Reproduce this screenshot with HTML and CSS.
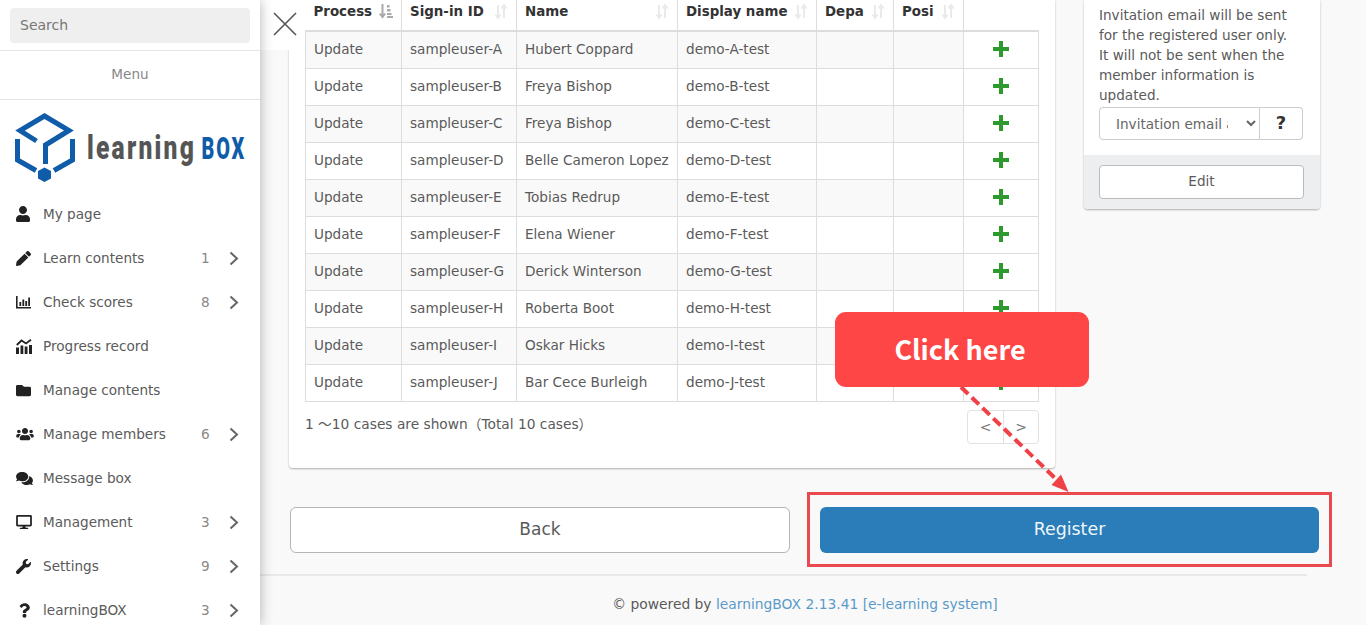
FILE: index.html
```html
<!DOCTYPE html>
<html lang="en">
<head>
<meta charset="utf-8">
<title>learningBOX</title>
<link rel="stylesheet" href="styles.css">
</head>
<body>
<aside class="sidebar">
  <div class="search-box"><input class="search-input" type="text" placeholder="Search"></div>
  <div class="menu-title">Menu</div>
  <div class="logo">
    <svg class="logo-svg" width="260" height="76" viewBox="0 108 260 76">
      <g fill="none" stroke="#0f5ca8" stroke-width="5" stroke-linejoin="miter">
        <path d="M36.500 141 20 130.500 44.500 116 69 130.500 45.500 145V164"/>
        <path d="M17.500 139V160L36 170.500"/>
        <path d="M72.500 139V160L54 170.500"/>
      </g>
      <path class="logo-dot" d="M44.500 167.500 51 171V178.500L44.500 182 38 178.500V171Z"/>
      <text class="logo-word" transform="translate(87 159) scale(.745 1)">learning</text>
      <text class="logo-box" transform="translate(201.500 159) scale(.62 1)">BOX</text>
    </svg>
  </div>
  <nav class="nav">
    <a class="nav-item"><span class="nav-icon"><svg width="14" height="16" viewBox="0 0 448 512"><path d="M224 256c70.700 0 128-57.300 128-128S294.700 0 224 0 96 57.300 96 128s57.300 128 128 128zm89.600 32h-16.700c-22.200 10.200-46.900 16-72.900 16s-50.600-5.800-72.900-16h-16.700C60.200 288 0 348.200 0 422.400V464c0 26.500 21.500 48 48 48h352c26.500 0 48-21.500 48-48v-41.600c0-74.200-60.200-134.400-134.400-134.400z"/></svg></span><span class="nav-label">My page</span></a>
    <a class="nav-item"><span class="nav-icon"><svg width="15" height="15" viewBox="0 0 512 512"><path d="M497.900 142.100l-46.100 46.100c-4.700 4.700-12.300 4.700-17 0l-111-111c-4.700-4.700-4.700-12.300 0-17l46.100-46.100c18.700-18.700 49.100-18.700 67.900 0l60.100 60.100c18.800 18.700 18.800 49.100 0 67.900zM284.200 99.800L21.600 362.400.4 483.900c-2.900 16.400 11.400 30.600 27.800 27.800l121.500-21.300 262.600-262.600c4.700-4.700 4.700-12.300 0-17l-111-111c-4.800-4.700-12.400-4.700-17.100 0z"/></svg></span><span class="nav-label">Learn contents</span><span class="nav-count">1</span><svg class="chev" width="10" height="15" viewBox="0 0 10 15"><path d="M1.500 1.500 8 7.500 1.500 13.500"/></svg></a>
    <a class="nav-item"><span class="nav-icon"><svg width="15" height="13" viewBox="0 0 15 13"><path d="M0 0h1.600v11H15v1.600H0z"/><path d="M3.400 6h1.800v4H3.400zM6.400 3.500h1.800V10H6.400zM9.300 5h1.800v5H9.300zM12.200 1.500H14V10h-1.800z"/></svg></span><span class="nav-label">Check scores</span><span class="nav-count">8</span><svg class="chev" width="10" height="15" viewBox="0 0 10 15"><path d="M1.500 1.500 8 7.500 1.500 13.500"/></svg></a>
    <a class="nav-item"><span class="nav-icon"><svg width="16" height="15" viewBox="0 0 16 15"><path d="M0 8.500h3V15H0zM4.500 6.500h2.800V15H4.500zM8.700 7.500h2.800V15H8.700zM13 6h3v9h-3z"/><path d="M.8 6 5.500 1.500 10 4.500 15 .8" fill="none" stroke="#222" stroke-width="1.800"/></svg></span><span class="nav-label">Progress record</span></a>
    <a class="nav-item"><span class="nav-icon"><svg width="15" height="15" viewBox="0 0 512 512"><path d="M464 128H272l-64-64H48C21.490 64 0 85.490 0 112v288c0 26.510 21.490 48 48 48h416c26.510 0 48-21.490 48-48V176c0-26.510-21.490-48-48-48z"/></svg></span><span class="nav-label">Manage contents</span></a>
    <a class="nav-item"><span class="nav-icon"><svg width="18" height="14" viewBox="0 0 640 512"><path d="M96 224c35.300 0 64-28.700 64-64s-28.700-64-64-64-64 28.700-64 64 28.700 64 64 64zm448 0c35.300 0 64-28.700 64-64s-28.700-64-64-64-64 28.700-64 64 28.700 64 64 64zm32 32h-64c-17.600 0-33.500 7.100-45.100 18.600 40.300 22.100 68.900 62 75.100 109.400h66c17.700 0 32-14.300 32-32v-32c0-35.300-28.700-64-64-64zm-256 0c61.900 0 112-50.100 112-112S381.900 32 320 32 208 82.100 208 144s50.100 112 112 112zm76.800 32h-8.300c-20.800 10-43.900 16-68.500 16s-47.600-6-68.500-16h-8.300C179.600 288 128 339.600 128 403.200V432c0 26.500 21.500 48 48 48h288c26.500 0 48-21.500 48-48v-28.800c0-63.600-51.600-115.200-115.200-115.200zm-223.700-13.400C161.500 263.100 145.600 256 128 256H64c-35.300 0-64 28.700-64 64v32c0 17.700 14.300 32 32 32h65.900c6.300-47.400 34.900-87.300 75.200-109.400z"/></svg></span><span class="nav-label">Manage members</span><span class="nav-count">6</span><svg class="chev" width="10" height="15" viewBox="0 0 10 15"><path d="M1.500 1.500 8 7.500 1.500 13.500"/></svg></a>
    <a class="nav-item"><span class="nav-icon"><svg width="17" height="15" viewBox="0 0 576 512"><path d="M416 192c0-88.400-93.100-160-208-160S0 103.600 0 192c0 34.300 14.100 65.900 38 92-13.400 30.200-35.500 54.200-35.800 54.500-2.200 2.300-2.800 5.700-1.500 8.700S4.800 352 8 352c36.600 0 66.900-12.300 88.700-25 32.200 15.700 70.300 25 111.300 25 114.900 0 208-71.600 208-160zm122 220c23.900-26 38-57.700 38-92 0-66.900-53.500-124.200-129.300-148.100.9 6.600 1.300 13.300 1.300 20.100 0 105.900-107.700 192-240 192-10.800 0-21.300-.8-31.700-1.900C207.800 439.600 281.800 480 368 480c41 0 79.100-9.200 111.300-25 21.800 12.700 52.100 25 88.700 25 3.200 0 6.100-1.900 7.300-4.800 1.300-2.900.7-6.300-1.500-8.700-.3-.3-22.400-24.200-35.800-54.500z"/></svg></span><span class="nav-label">Message box</span></a>
    <a class="nav-item"><span class="nav-icon"><svg width="16" height="14" viewBox="0 0 576 512"><path d="M528 0H48C21.500 0 0 21.500 0 48v320c0 26.500 21.500 48 48 48h192l-16 48h-72c-13.300 0-24 10.700-24 24s10.700 24 24 24h272c13.300 0 24-10.700 24-24s-10.700-24-24-24h-72l-16-48h192c26.500 0 48-21.500 48-48V48c0-26.500-21.500-48-48-48zm-16 352H64V64h448v288z"/></svg></span><span class="nav-label">Management</span><span class="nav-count">3</span><svg class="chev" width="10" height="15" viewBox="0 0 10 15"><path d="M1.500 1.500 8 7.500 1.500 13.500"/></svg></a>
    <a class="nav-item"><span class="nav-icon"><svg width="15" height="15" viewBox="0 0 512 512"><path d="M507.730 109.100c-2.240-9.030-13.540-12.090-20.120-5.510l-74.360 74.360-67.880-11.310-11.310-67.880 74.360-74.360c6.620-6.620 3.430-17.900-5.660-20.160-47.380-11.740-99.550.91-136.580 37.930-39.640 39.640-50.550 97.100-34.050 147.200L18.740 402.760c-24.990 24.990-24.990 65.510 0 90.500 24.990 24.990 65.510 24.990 90.500 0l213.210-213.210c50.120 16.710 107.470 5.680 147.370-34.220 37.070-37.070 49.700-89.320 37.910-136.730z"/></svg></span><span class="nav-label">Settings</span><span class="nav-count">9</span><svg class="chev" width="10" height="15" viewBox="0 0 10 15"><path d="M1.500 1.500 8 7.500 1.500 13.500"/></svg></a>
    <a class="nav-item"><span class="nav-icon icon-q"><svg width="11" height="15" viewBox="0 0 384 512"><path d="M202.021 0C122.202 0 70.503 32.703 29.914 91.026c-7.363 10.580-5.093 25.086 5.178 32.874l43.138 32.709c10.373 7.865 25.132 6.026 33.253-4.148 25.049-31.381 43.630-49.449 82.757-49.449 30.764 0 68.816 19.799 68.816 49.631 0 22.552-18.617 34.134-48.993 51.164-35.423 19.860-82.299 44.576-82.299 106.405V320c0 13.255 10.745 24 24 24h72.471c13.255 0 24-10.745 24-24v-5.773c0-42.860 125.268-44.644 125.268-160.627C377.504 66.256 286.902 0 202.021 0zM192 373.459c-38.196 0-69.271 31.075-69.271 69.271 0 38.195 31.075 69.270 69.271 69.270s69.271-31.075 69.271-69.271-31.075-69.270-69.271-69.270z"/></svg></span><span class="nav-label">learningBOX</span><span class="nav-count">3</span><svg class="chev" width="10" height="15" viewBox="0 0 10 15"><path d="M1.500 1.500 8 7.500 1.500 13.500"/></svg></a>
  </nav>
</aside>

<main class="main">
  <button class="close-btn" type="button" aria-label="Close"><svg width="24" height="24" viewBox="0 0 24 24"><path d="M1 1 23 23M23 1 1 23"/></svg></button>

  <div class="top-row">
    <section class="card table-card">
      <table class="data-table">
        <colgroup><col class="c-process"><col class="c-id"><col class="c-name"><col class="c-display"><col class="c-dept"><col class="c-pos"><col class="c-action"></colgroup>
        <thead>
          <tr>
            <th><div class="th-inner"><span>Process</span><svg class="sort active" width="14" height="15" viewBox="0 0 14 15"><path d="M3.500 0v12M.8 9.500l2.700 3.500 2.700-3.500" fill="none" stroke-width="2"/><path class="fill" d="M8 1h2.500v2.500H8zM8 5h3.500v2.500H8zM8 9h4.500v2H8zM8 12h6v2H8z"/></svg></div></th>
            <th><div class="th-inner"><span>Sign-in ID</span><svg class="sort" width="14" height="15" viewBox="0 0 14 15"><path d="M4 1v12M1.500 10.500 4 14l2.500-3.500M10 14V2M7.500 4.500 10 1l2.500 3.500" fill="none" stroke-width="2"/></svg></div></th>
            <th><div class="th-inner"><span>Name</span><svg class="sort" width="14" height="15" viewBox="0 0 14 15"><path d="M4 1v12M1.500 10.500 4 14l2.500-3.500M10 14V2M7.500 4.500 10 1l2.500 3.500" fill="none" stroke-width="2"/></svg></div></th>
            <th><div class="th-inner"><span>Display name</span><svg class="sort" width="14" height="15" viewBox="0 0 14 15"><path d="M4 1v12M1.500 10.500 4 14l2.500-3.500M10 14V2M7.500 4.500 10 1l2.500 3.500" fill="none" stroke-width="2"/></svg></div></th>
            <th><div class="th-inner"><span>Depa</span><svg class="sort" width="14" height="15" viewBox="0 0 14 15"><path d="M4 1v12M1.500 10.500 4 14l2.500-3.500M10 14V2M7.500 4.500 10 1l2.500 3.500" fill="none" stroke-width="2"/></svg></div></th>
            <th><div class="th-inner"><span>Posi</span><svg class="sort" width="14" height="15" viewBox="0 0 14 15"><path d="M4 1v12M1.500 10.500 4 14l2.500-3.500M10 14V2M7.500 4.500 10 1l2.500 3.500" fill="none" stroke-width="2"/></svg></div></th>
            <th></th>
          </tr>
        </thead>
        <tbody>
          <tr><td>Update</td><td>sampleuser-A</td><td>Hubert Coppard</td><td>demo-A-test</td><td></td><td></td><td class="action"><svg class="plus" width="16" height="16" viewBox="0 0 16 16"><path d="M6 0h4v6h6v4h-6v6H6v-6H0V6h6z"/></svg></td></tr>
          <tr><td>Update</td><td>sampleuser-B</td><td>Freya Bishop</td><td>demo-B-test</td><td></td><td></td><td class="action"><svg class="plus" width="16" height="16" viewBox="0 0 16 16"><path d="M6 0h4v6h6v4h-6v6H6v-6H0V6h6z"/></svg></td></tr>
          <tr><td>Update</td><td>sampleuser-C</td><td>Freya Bishop</td><td>demo-C-test</td><td></td><td></td><td class="action"><svg class="plus" width="16" height="16" viewBox="0 0 16 16"><path d="M6 0h4v6h6v4h-6v6H6v-6H0V6h6z"/></svg></td></tr>
          <tr><td>Update</td><td>sampleuser-D</td><td>Belle Cameron Lopez</td><td>demo-D-test</td><td></td><td></td><td class="action"><svg class="plus" width="16" height="16" viewBox="0 0 16 16"><path d="M6 0h4v6h6v4h-6v6H6v-6H0V6h6z"/></svg></td></tr>
          <tr><td>Update</td><td>sampleuser-E</td><td>Tobias Redrup</td><td>demo-E-test</td><td></td><td></td><td class="action"><svg class="plus" width="16" height="16" viewBox="0 0 16 16"><path d="M6 0h4v6h6v4h-6v6H6v-6H0V6h6z"/></svg></td></tr>
          <tr><td>Update</td><td>sampleuser-F</td><td>Elena Wiener</td><td>demo-F-test</td><td></td><td></td><td class="action"><svg class="plus" width="16" height="16" viewBox="0 0 16 16"><path d="M6 0h4v6h6v4h-6v6H6v-6H0V6h6z"/></svg></td></tr>
          <tr><td>Update</td><td>sampleuser-G</td><td>Derick Winterson</td><td>demo-G-test</td><td></td><td></td><td class="action"><svg class="plus" width="16" height="16" viewBox="0 0 16 16"><path d="M6 0h4v6h6v4h-6v6H6v-6H0V6h6z"/></svg></td></tr>
          <tr><td>Update</td><td>sampleuser-H</td><td>Roberta Boot</td><td>demo-H-test</td><td></td><td></td><td class="action"><svg class="plus" width="16" height="16" viewBox="0 0 16 16"><path d="M6 0h4v6h6v4h-6v6H6v-6H0V6h6z"/></svg></td></tr>
          <tr><td>Update</td><td>sampleuser-I</td><td>Oskar Hicks</td><td>demo-I-test</td><td></td><td></td><td class="action"><svg class="plus" width="16" height="16" viewBox="0 0 16 16"><path d="M6 0h4v6h6v4h-6v6H6v-6H0V6h6z"/></svg></td></tr>
          <tr><td>Update</td><td>sampleuser-J</td><td>Bar Cece Burleigh</td><td>demo-J-test</td><td></td><td></td><td class="action"><svg class="plus" width="16" height="16" viewBox="0 0 16 16"><path d="M6 0h4v6h6v4h-6v6H6v-6H0V6h6z"/></svg></td></tr>
        </tbody>
      </table>
      <div class="table-foot">
        <span class="case-count">1 ～10 cases are shown（Total 10 cases）</span>
        <div class="pager"><span class="pager-btn">&lt;</span><span class="pager-btn">&gt;</span></div>
      </div>
    </section>

    <section class="card side-card">
      <div class="side-body">
        <p class="side-text">Invitation email will be sent for the registered user only.<br>It will not be sent when the member information is updated.</p>
        <div class="select-group">
          <select class="invite-select"><option>Invitation email after registration</option></select>
          <button class="help-btn" type="button">?</button>
        </div>
      </div>
      <div class="side-foot"><button class="edit-btn" type="button">Edit</button></div>
    </section>
  </div>

  <div class="action-row">
    <button class="btn btn-back" type="button">Back</button>
    <button class="btn btn-register" type="button">Register</button>
  </div>

  <footer class="footer">© powered by <a class="footer-link">learningBOX 2.13.41 [e-learning system]</a></footer>

  <svg class="arrow" width="1366" height="625" viewBox="0 0 1366 625">
    <path class="arrow-line" d="M961 387 1060 483"/>
    <path class="arrow-head" d="M1068.500 492 1051.500 485 1061 474.500z"/>
  </svg>
  <div class="highlight"></div>
  <div class="callout">Click here</div>
</main>
</body>
</html>
```

FILE: styles.css
```css
* { box-sizing: border-box; }
html, body { margin: 0; height: 625px; overflow: hidden; }
body {
  display: flex;
  background: #f9f9f9;
  color: #5a5a5a;
  font-family: "DejaVu Sans", "Noto Sans CJK JP", sans-serif;
  font-size: 13.6px;
}

/* Sidebar */
.sidebar {
  position: relative;
  z-index: 5;
  flex: 0 0 260px;
  height: 625px;
  background: #fff;
  box-shadow: 0 0 12px rgba(0, 0, 0, .3);
}
.search-box { height: 51px; padding: 8px 10px 0; border-bottom: 1px solid #e4e4e4; }
.search-input {
  display: block;
  width: 240px;
  height: 35px;
  padding: 0 10px 2px;
  border: 0;
  border-radius: 4px;
  background: #efefef;
  font: inherit;
  font-size: 14px;
}
.search-input::placeholder { color: #777; opacity: 1; }
.menu-title {
  height: 49px;
  line-height: 46px;
  text-align: center;
  color: #888;
  border-bottom: 1px solid #e4e4e4;
}
.logo { height: 92px; padding-top: 8px; }
.logo-svg { display: block; }
.logo-dot { fill: #0f5ca8; }
.logo-word { font-family: "Roboto", sans-serif; font-weight: 900; font-size: 33px; letter-spacing: 3px; fill: #555; }
.logo-box { font-family: "Roboto", sans-serif; font-weight: 900; font-size: 32px; letter-spacing: 3px; fill: #0f5ca8; }
.nav { display: flex; flex-direction: column; }
.nav-item { display: flex; align-items: center; height: 44px; padding-left: 16px; color: #5a5a5a; }
.nav-icon { flex: 0 0 27px; display: flex; align-items: center; justify-content: flex-start; }
.nav-icon svg { display: block; fill: #222; }
.icon-q { padding-left: 3px; }
.nav-label { flex: 1; }
.nav-count { width: 28px; color: #888; }
.chev { margin-right: 21px; fill: none; stroke: #666; stroke-width: 2; }

/* Main */
.main { position: relative; flex: 1; min-width: 0; padding: 0 46px 0 29px; }
.close-btn {
  position: absolute;
  left: 0;
  top: 0;
  display: flex;
  align-items: flex-start;
  width: 29px;
  height: 50px;
  padding: 12px 0 0 13px;
  border: 0;
  background: #fff;
  overflow: visible;
  z-index: 2;
}
.close-btn svg { display: block; flex: none; overflow: visible; fill: none; stroke: #555; stroke-width: 1.6; }

.top-row { display: flex; align-items: flex-start; gap: 29px; }
.card { background: #fff; border-radius: 0 0 4px 4px; box-shadow: 0 1px 2px rgba(0, 0, 0, .3); }
.table-card { flex: 0 0 765px; height: 468px; padding: 0 16px; }

.data-table { width: 733px; border-collapse: collapse; table-layout: fixed; }
.c-process { width: 96px; }
.c-id { width: 115px; }
.c-name { width: 161px; }
.c-display { width: 139px; }
.c-dept { width: 77px; }
.c-pos { width: 70px; }
.c-action { width: 75px; }
.data-table th {
  height: 31px;
  padding: 0 8px;
  border-left: 1px solid #ddd;
  border-right: 1px solid #ddd;
  border-bottom: 2px solid #ddd;
  color: #333;
  font-weight: 700;
  font-size: 13.4px;
  text-align: left;
  vertical-align: top;
}
.data-table th:first-child, .data-table th:last-child { border-left: 0; }
.data-table th:last-child { border-right: 0; }
.th-inner { display: flex; justify-content: space-between; align-items: center; height: 22px; }
.sort { flex: none; stroke: #eaeaea; }
.sort.active { stroke: #aaa; }
.sort .fill { fill: #aaa; stroke: none; }
.data-table td {
  height: 37px;
  padding: 0 8px 2px;
  border: 1px solid #ddd;
  white-space: nowrap;
}
.data-table tbody tr:nth-child(odd) td { background: #f9f9f9; }
.data-table tbody tr td.action { background: #fff; text-align: center; padding: 0 0 2px; }
.plus { display: block; margin: 0 auto; fill: #2e9a2e; }

.table-foot { display: flex; justify-content: space-between; align-items: flex-start; padding-top: 8px; }
.case-count { margin-top: 3px; font-size: 13.75px; }
.pager { display: flex; height: 34px; border: 1px solid #e2e2e2; border-radius: 4px; }
.pager-btn { display: flex; align-items: center; justify-content: center; width: 35px; color: #777; font-size: 14px; }
.pager-btn + .pager-btn { border-left: 1px solid #e2e2e2; }

.side-card { flex: 0 0 236px; }
.side-body { height: 155px; padding: 5px 15px 0; }
.side-text { margin: 0 0 2px; line-height: 20px; font-size: 13.6px; }
.select-group { display: flex; height: 33px; }
.invite-select {
  width: 161px;
  height: 33px;
  padding: 0 15px 0 12px;
  border: 1px solid #ccc;
  border-radius: 4px 0 0 4px;
  background: #fff;
  color: #666;
  font: inherit;
}
.help-btn {
  width: 43px;
  height: 33px;
  padding: 0 0 3px;
  border: 1px solid #ccc;
  border-left: 0;
  border-radius: 0 4px 4px 0;
  background: #fff;
  color: #333;
  font: inherit;
  font-weight: 700;
  font-size: 18px;
}
.side-foot { height: 54px; padding: 10px 15px 0; background: #eceeef; border-radius: 0 0 4px 4px; }
.edit-btn {
  display: block;
  width: 205px;
  height: 34px;
  padding: 0 0 2px;
  border: 1px solid #bbb;
  border-radius: 4px;
  background: #fff;
  color: #5a5a5a;
  font: inherit;
}

.action-row { display: flex; gap: 30px; margin: 39px 0 0 1px; }
.btn { width: 500px; height: 46px; padding: 0 0 2px; border-radius: 6px; font: inherit; font-size: 17px; }
.btn-back { background: #fff; border: 1px solid #b5b5b5; color: #5a5a5a; }
.btn-register { width: 499px; background: #2a7db8; border: 0; color: #eef6fb; font-size: 17.4px; }

.footer {
  height: 51px;
  margin: 21px 13px 0 -29px;
  border-top: 2px solid #e9e9e9;
  padding: 20px 0 0 43px;
  text-align: center;
  font-size: 13.83px;
}
.footer-link { color: #5b9bc9; }

/* Overlays */
.arrow { position: absolute; left: -260px; top: 0; z-index: 3; pointer-events: none; }
.arrow-line { fill: none; stroke: #ef4146; stroke-width: 4; stroke-dasharray: 10 5; }
.arrow-head { fill: #ef4146; }
.highlight {
  position: absolute;
  left: 547px;
  top: 492px;
  width: 525px;
  height: 75px;
  border: 3px solid #e84a4f;
  z-index: 3;
}
.callout {
  position: absolute;
  left: 575px;
  top: 312px;
  width: 254px;
  height: 75px;
  padding-right: 4px;
  border-radius: 11px;
  background: #fe4646;
  color: #fff;
  font-family: "Noto Sans CJK JP", sans-serif;
  font-weight: 700;
  font-size: 27px;
  line-height: 73px;
  text-align: center;
  z-index: 4;
}
```
